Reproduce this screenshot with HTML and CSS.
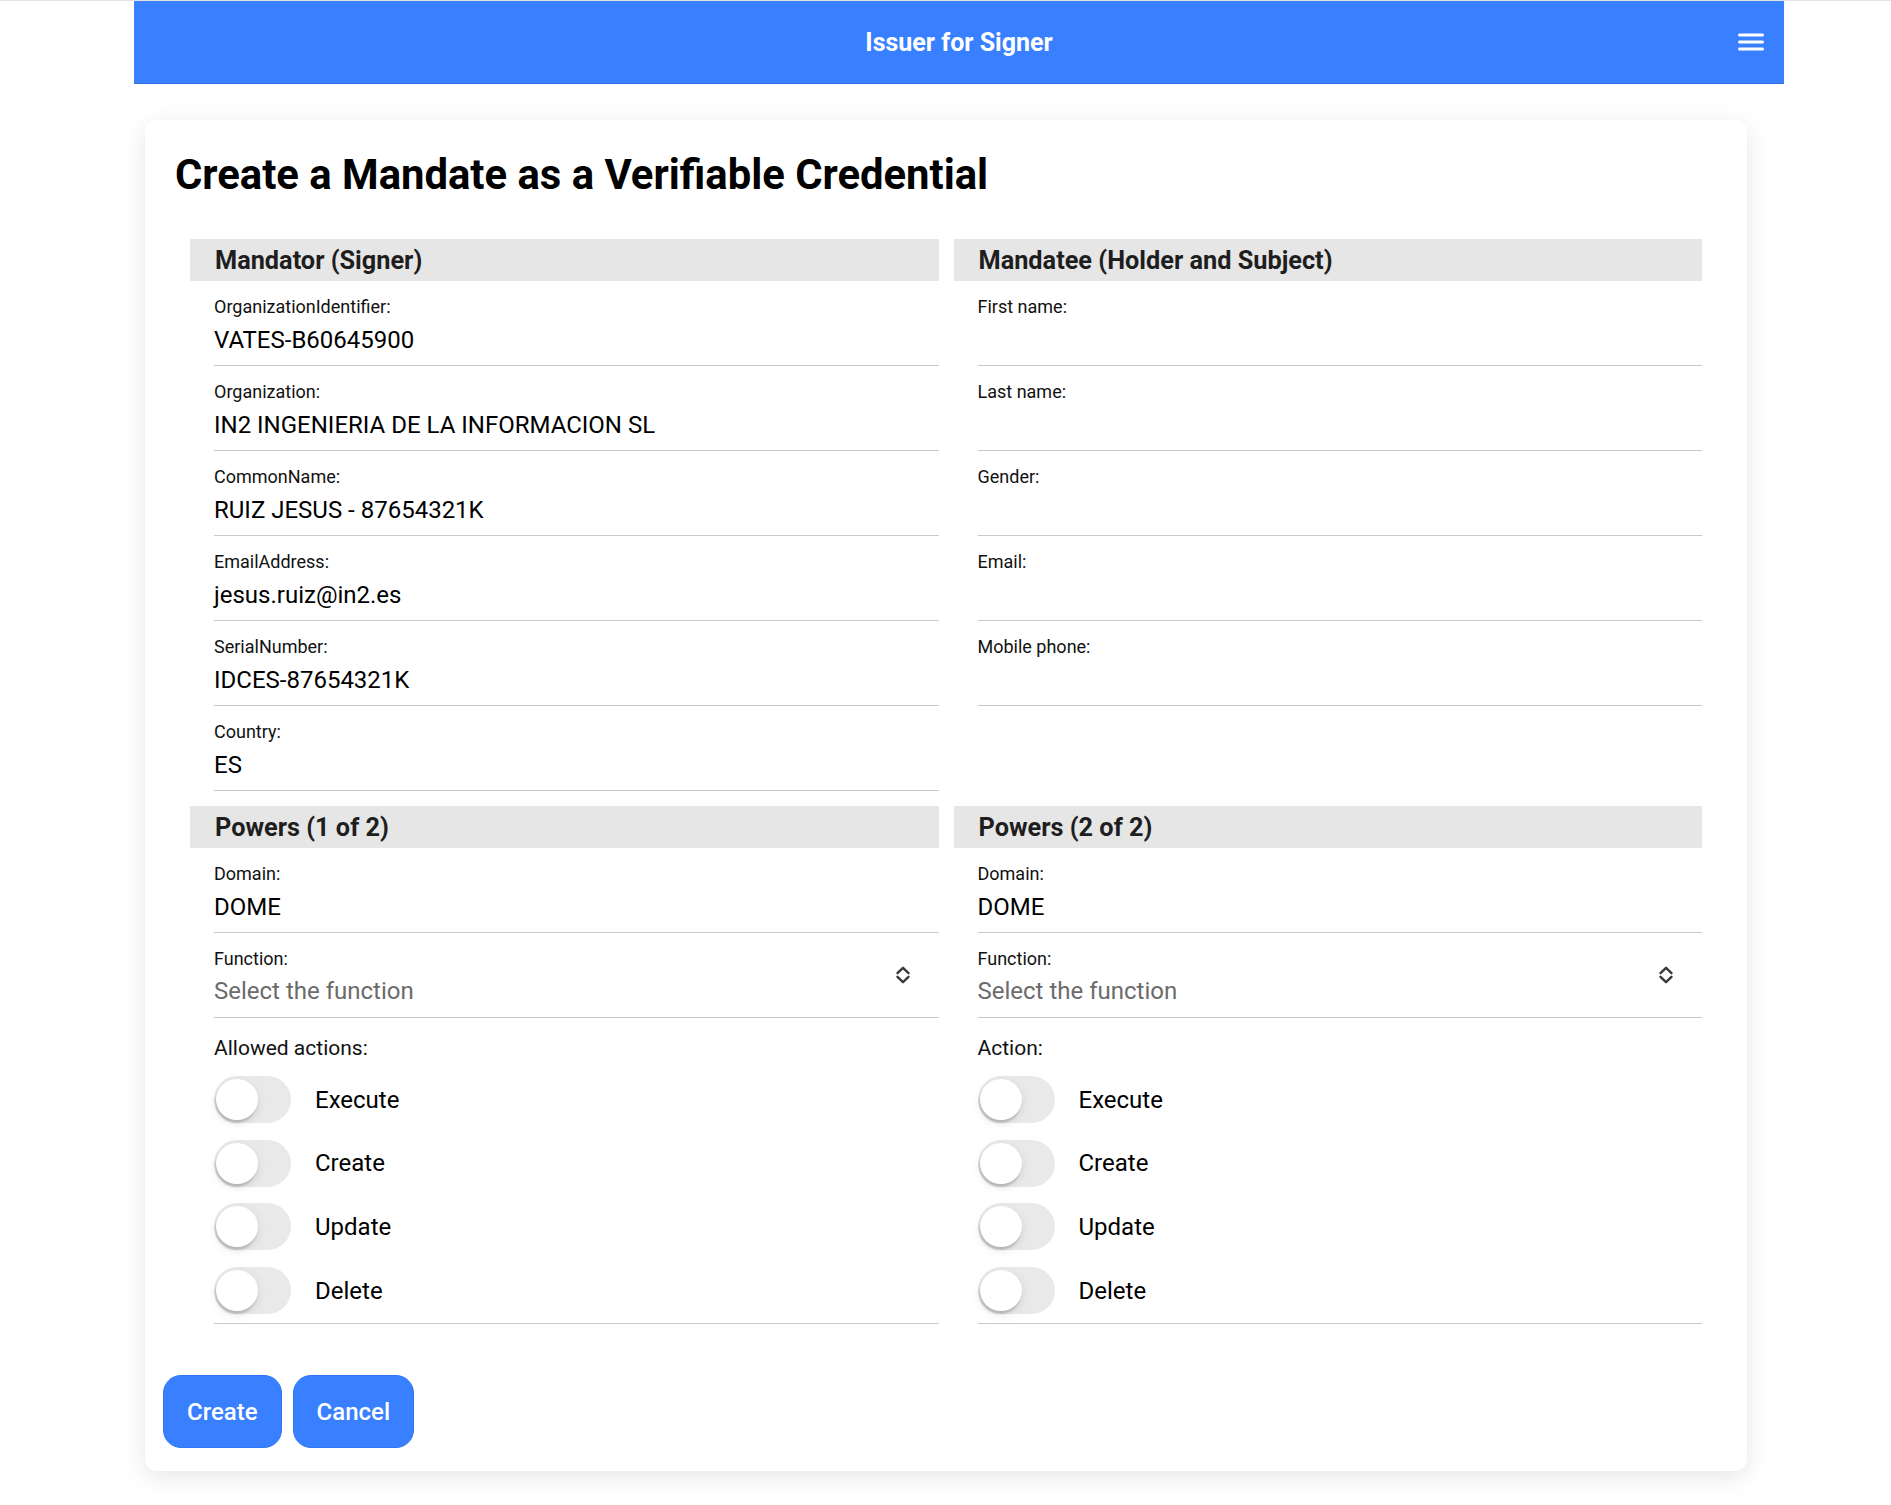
FILE: index.html
```html
<!DOCTYPE html>
<html lang="en">
<head>
<meta charset="utf-8">
<title>Issuer for Signer</title>
<link rel="stylesheet" href="styles.css">
</head>
<body>
<div class="topline"></div>
<header class="toolbar">
  <div class="toolbar-title">Issuer for Signer</div>
  <button class="menu-btn" aria-label="Menu">
    <svg width="26" height="20" viewBox="0 0 26 20"><g stroke="#fff" stroke-width="3" stroke-linecap="round"><line x1="1.5" y1="3" x2="24.5" y2="3"/><line x1="1.5" y1="10" x2="24.5" y2="10"/><line x1="1.5" y1="17" x2="24.5" y2="17"/></g></svg>
  </button>
</header>

<main class="card">
  <h1 class="card-title">Create a Mandate as a Verifiable Credential</h1>

  <div class="grid">
    <section class="col">
      <h2 class="section-head">Mandator (Signer)</h2>
      <div class="item"><div class="label">OrganizationIdentifier:</div><div class="value">VATES-B60645900</div></div>
      <div class="item"><div class="label">Organization:</div><div class="value">IN2 INGENIERIA DE LA INFORMACION SL</div></div>
      <div class="item"><div class="label">CommonName:</div><div class="value">RUIZ JESUS - 87654321K</div></div>
      <div class="item"><div class="label">EmailAddress:</div><div class="value">jesus.ruiz@in2.es</div></div>
      <div class="item"><div class="label">SerialNumber:</div><div class="value">IDCES-87654321K</div></div>
      <div class="item"><div class="label">Country:</div><div class="value">ES</div></div>
    </section>

    <section class="col">
      <h2 class="section-head">Mandatee (Holder and Subject)</h2>
      <div class="item"><div class="label">First name:</div><div class="value">&nbsp;</div></div>
      <div class="item"><div class="label">Last name:</div><div class="value">&nbsp;</div></div>
      <div class="item"><div class="label">Gender:</div><div class="value">&nbsp;</div></div>
      <div class="item"><div class="label">Email:</div><div class="value">&nbsp;</div></div>
      <div class="item"><div class="label">Mobile phone:</div><div class="value">&nbsp;</div></div>
    </section>

    <section class="col">
      <h2 class="section-head">Powers (1 of 2)</h2>
      <div class="item"><div class="label">Domain:</div><div class="value">DOME</div></div>
      <div class="item select-item">
        <div class="select-text"><div class="label">Function:</div><div class="value placeholder">Select the function</div></div>
        <svg class="select-icon" width="16" height="18" viewBox="0 0 16 18"><g fill="none" stroke="#3a3a3a" stroke-width="2.4" stroke-linecap="round" stroke-linejoin="round"><path d="M2.5 7.2 L8 1.8 L13.5 7.2"/><path d="M2.5 10.8 L8 16.2 L13.5 10.8"/></g></svg>
      </div>
      <div class="item actions">
        <div class="actions-label">Allowed actions:</div>
        <div class="toggle-row"><span class="toggle"><span class="knob"></span></span><span class="toggle-text">Execute</span></div>
        <div class="toggle-row"><span class="toggle"><span class="knob"></span></span><span class="toggle-text">Create</span></div>
        <div class="toggle-row"><span class="toggle"><span class="knob"></span></span><span class="toggle-text">Update</span></div>
        <div class="toggle-row"><span class="toggle"><span class="knob"></span></span><span class="toggle-text">Delete</span></div>
      </div>
    </section>

    <section class="col">
      <h2 class="section-head">Powers (2 of 2)</h2>
      <div class="item"><div class="label">Domain:</div><div class="value">DOME</div></div>
      <div class="item select-item">
        <div class="select-text"><div class="label">Function:</div><div class="value placeholder">Select the function</div></div>
        <svg class="select-icon" width="16" height="18" viewBox="0 0 16 18"><g fill="none" stroke="#3a3a3a" stroke-width="2.4" stroke-linecap="round" stroke-linejoin="round"><path d="M2.5 7.2 L8 1.8 L13.5 7.2"/><path d="M2.5 10.8 L8 16.2 L13.5 10.8"/></g></svg>
      </div>
      <div class="item actions">
        <div class="actions-label">Action:</div>
        <div class="toggle-row"><span class="toggle"><span class="knob"></span></span><span class="toggle-text">Execute</span></div>
        <div class="toggle-row"><span class="toggle"><span class="knob"></span></span><span class="toggle-text">Create</span></div>
        <div class="toggle-row"><span class="toggle"><span class="knob"></span></span><span class="toggle-text">Update</span></div>
        <div class="toggle-row"><span class="toggle"><span class="knob"></span></span><span class="toggle-text">Delete</span></div>
      </div>
    </section>
  </div>

  <div class="buttons">
    <button class="btn">Create</button>
    <button class="btn">Cancel</button>
  </div>
</main>
</body>
</html>
```
FILE: styles.css
```css
* { box-sizing: border-box; }

html, body {
  margin: 0;
  padding: 0;
  background: #fff;
  font-family: Roboto, "Liberation Sans", Arial, sans-serif;
  color: #000;
}

body { min-height: 1505px; }

.topline {
  height: 1px;
  background: #e2e2e2;
}

.toolbar {
  position: relative;
  margin-left: 134px;
  width: 1650px;
  height: 83px;
  background: #3880ff;
  border-bottom: 1px solid #3170e6;
  display: flex;
  align-items: center;
  justify-content: center;
}

.toolbar-title {
  color: #fff;
  font-size: 25px;
  font-weight: 700;
  letter-spacing: 0;
}

.menu-btn {
  position: absolute;
  right: 18px;
  top: 24px;
  width: 30px;
  height: 34px;
  padding: 0;
  border: 0;
  background: transparent;
  display: flex;
  align-items: center;
  justify-content: center;
}

.card {
  margin: 36px 0 0 145px;
  width: 1602px;
  background: #fff;
  border-radius: 12px;
  box-shadow: 0 6px 24px rgba(0, 0, 0, 0.10);
  padding: 30px 0 23px;
}

.card-title {
  margin: 0 0 40px 30px;
  font-size: 41.8px;
  line-height: 49px;
  font-weight: 700;
  color: #000;
}

.grid {
  margin: 0 45px;
  display: grid;
  grid-template-columns: 1fr 1fr;
  column-gap: 15px;
  row-gap: 15px;
  align-items: start;
}

.section-head {
  margin: 0;
  height: 42px;
  line-height: 43px;
  background: #e6e6e6;
  padding-left: 25px;
  font-size: 25.3px;
  font-weight: 700;
  color: #1e1e1e;
}

.item {
  margin-left: 24px;
  border-bottom: 1px solid #c9c9c9;
  padding: 15px 0 11px;
  height: 85px;
}

.label {
  font-size: 18px;
  line-height: 21px;
  color: #111;
}

.value {
  margin-top: 9px;
  font-size: 24px;
  line-height: 28px;
  color: #000;
}

.placeholder { color: #6b6b6b; }

.select-item {
  display: flex;
  align-items: center;
  justify-content: space-between;
  padding: 15px 0 12px;
}

.select-item .value { margin-top: 8px; }

.select-icon {
  margin-right: 28px;
  margin-top: -3px;
  flex: none;
}

.item.actions {
  height: 306px;
  padding: 18px 0 0;
}

.actions-label {
  font-size: 21px;
  line-height: 25px;
  color: #111;
  margin-bottom: 7px;
}

.toggle-row {
  height: 63.6px;
  display: flex;
  align-items: center;
}

.toggle {
  position: relative;
  width: 77px;
  height: 47px;
  border-radius: 24px;
  background: #e9e9ea;
  flex: none;
}

.knob {
  position: absolute;
  left: 2px;
  top: 3px;
  width: 42px;
  height: 41px;
  border-radius: 50%;
  background: #fff;
  box-shadow: -1px 3px 2px rgba(0, 0, 0, 0.16), 0 3px 10px rgba(0, 0, 0, 0.10);
}

.toggle-text {
  margin-left: 24px;
  font-size: 24px;
  color: #000;
}

.buttons {
  margin: 51px 0 0 18px;
  display: flex;
  gap: 11px;
}

.btn {
  height: 73px;
  padding: 0 23px;
  border: 1px solid #2f76f5;
  border-radius: 18px;
  background: #3880ff;
  color: #fff;
  font-family: Roboto, "Liberation Sans", Arial, sans-serif;
  font-size: 24px;
  font-weight: 500;
}
```
